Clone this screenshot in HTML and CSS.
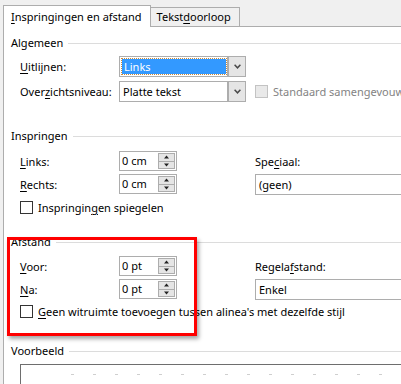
FILE: index.html
```html
<!DOCTYPE html>
<html lang="nl">
  <head>
    <meta charset="UTF-8" />
    <meta name="viewport" content="width=device-width, initial-scale=1.0" />
    <title>Alinea</title>
    <link rel="stylesheet" href="styles.css">
  </head>
  <body>
    <div class="dialog">
      <div class="tabs">
        <div class="tab active"><u>I</u>nspringingen en afstand</div>
        <div class="tab">Tekst<u>d</u>oorloop</div>
      </div>
      <div class="panel">
        <div class="legend">Algemeen</div>
        <div class="fields general">
          <span class="label"><u>U</u>itlijnen:</span>
          <div class="select">
            <span class="value"><span class="selected">Links</span></span>
            <span class="drop"><svg width="7" height="5" viewBox="0 0 7 5"><path d="M0.6 0.8 L3.5 3.8 L6.4 0.8" fill="none" stroke="#4a4a4a" stroke-width="1.5"/></svg></span>
          </div>
          <span></span>
          <span class="label">Over<u>z</u>ichtsniveau:</span>
          <div class="select">
            <span class="value">Platte tekst</span>
            <span class="drop"><svg width="7" height="5" viewBox="0 0 7 5"><path d="M0.6 0.8 L3.5 3.8 L6.4 0.8" fill="none" stroke="#4a4a4a" stroke-width="1.5"/></svg></span>
          </div>
          <div class="check disabled"><span class="box"></span><span>Standaard samengevouwen</span></div>
        </div>

        <div class="legend indent-title">Inspringen</div>
        <div class="fields spaced first">
          <span class="label"><u>L</u>inks:</span>
          <div class="spinner">
            <span class="value">0 cm</span>
            <span class="spin">
              <span class="up"><svg width="7" height="4" viewBox="0 0 7 4"><path d="M1 3.5 L3.5 0.5 L6 3.5Z" fill="#222"/></svg></span>
              <span class="down"><svg width="7" height="4" viewBox="0 0 7 4"><path d="M1 0.5 L3.5 3.5 L6 0.5Z" fill="#222"/></svg></span>
            </span>
          </div>
          <span class="label">Spe<u>c</u>iaal:</span>
          <span class="label"><u>R</u>echts:</span>
          <div class="spinner">
            <span class="value">0 cm</span>
            <span class="spin">
              <span class="up"><svg width="7" height="4" viewBox="0 0 7 4"><path d="M1 3.5 L3.5 0.5 L6 3.5Z" fill="#222"/></svg></span>
              <span class="down"><svg width="7" height="4" viewBox="0 0 7 4"><path d="M1 0.5 L3.5 3.5 L6 0.5Z" fill="#222"/></svg></span>
            </span>
          </div>
          <div class="select wide"><span class="value">(geen)</span></div>
          <div class="check row-check"><span class="box"></span><span>Inspringin<u>g</u>en spiegelen</span></div>
        </div>

        <div class="legend spacing-title">Afstand</div>
        <div class="fields spaced second">
          <span class="label"><u>V</u>oor:</span>
          <div class="spinner">
            <span class="value">0 pt</span>
            <span class="spin">
              <span class="up"><svg width="7" height="4" viewBox="0 0 7 4"><path d="M1 3.5 L3.5 0.5 L6 3.5Z" fill="#222"/></svg></span>
              <span class="down"><svg width="7" height="4" viewBox="0 0 7 4"><path d="M1 0.5 L3.5 3.5 L6 0.5Z" fill="#222"/></svg></span>
            </span>
          </div>
          <span class="label">Regela<u>f</u>stand:</span>
          <span class="label"><u>N</u>a:</span>
          <div class="spinner">
            <span class="value">0 pt</span>
            <span class="spin">
              <span class="up"><svg width="7" height="4" viewBox="0 0 7 4"><path d="M1 3.5 L3.5 0.5 L6 3.5Z" fill="#222"/></svg></span>
              <span class="down"><svg width="7" height="4" viewBox="0 0 7 4"><path d="M1 0.5 L3.5 3.5 L6 0.5Z" fill="#222"/></svg></span>
            </span>
          </div>
          <div class="select wide"><span class="value">Enkel</span></div>
          <div class="check row-check"><span class="box"></span><span><u>G</u>een witruimte toevoegen tussen alinea's met dezelfde stijl</span></div>
        </div>

        <div class="legend preview-title">Voorbeeld</div>
        <div class="preview"><div class="dashes"></div></div>
      </div>
      <div class="highlight"></div>
    </div>
  </body>
</html>
```

FILE: styles.css
```css
body {
  margin: 0;
  background-color: #f0f0f0;
  color: #000;
  font-family: "Noto Sans", sans-serif;
  font-size: 11px;
  overflow: hidden;
}
u {
  text-underline-offset: 2px;
}
.dialog {
  position: relative;
  width: 460px;
  margin-left: 3px;
  padding-top: 5px;
}
.tabs {
  display: flex;
  align-items: flex-end;
  height: 21px;
  border-bottom: 1px solid #adadad;
}
.tab {
  box-sizing: border-box;
  height: 19px;
  padding: 0 8px 0 6px;
  border: 1px solid #adadad;
  border-bottom: 0;
  border-left: 0;
  line-height: 18px;
}
.tab.active {
  height: 22px;
  margin-bottom: -1px;
  padding: 1px 8px 0 7px;
  border-left: 1px solid #adadad;
  background-color: #fff;
  line-height: 19px;
}
.panel {
  height: 400px;
  padding: 8px 0 0 7px;
  border-left: 1px solid #adadad;
  background-color: #fff;
}
.legend {
  display: flex;
  align-items: center;
  gap: 5px;
  height: 16px;
  line-height: 16px;
}
.legend::after {
  content: "";
  flex: 1;
  border-top: 1px solid #dcdcdc;
}
.fields {
  display: grid;
  grid-template-columns: 90px 127px 1fr;
  column-gap: 9px;
  align-items: center;
  padding-left: 9px;
}
.general {
  margin-top: 5px;
  grid-auto-rows: 21px;
  row-gap: 4px;
}
.indent-title {
  margin-top: 26px;
}
.spaced {
  grid-template-rows: 20px 20px 16px;
  row-gap: 3px;
}
.first {
  margin-top: 7px;
}
.first .row-check {
  margin-top: 5px;
}
.spacing-title {
  margin-top: 21px;
}
.second {
  margin-top: 6px;
}
.second .row-check {
  margin-top: 3px;
}
.preview-title {
  margin-top: 25px;
}
.select {
  box-sizing: border-box;
  display: flex;
  height: 21px;
  border: 1px solid #adadad;
  background-color: #fff;
}
.select .value {
  flex: 1;
  display: flex;
  align-items: center;
  padding-left: 3px;
}
.selected {
  flex: 1;
  margin: 1px 1px 1px -1px;
  padding-left: 2px;
  line-height: 15px;
  background-color: #3399ff;
  color: #fff;
  outline: 1px dotted #c9893a;
}
.drop {
  display: flex;
  align-items: center;
  justify-content: center;
  width: 16px;
  border-left: 2px solid #adadad;
  background-color: #e5e5e5;
}
.select.wide {
  width: 170px;
}
.spinner {
  box-sizing: border-box;
  display: flex;
  width: 58px;
  height: 20px;
  border: 1px solid #adadad;
}
.spinner .value {
  flex: 1;
  padding-left: 2px;
  line-height: 18px;
}
.spin {
  display: flex;
  flex-direction: column;
  width: 15px;
  margin: 1px 1px 1px 0;
  border: 1px solid #adadad;
  background-color: #e5e5e5;
}
.spin span {
  flex: 1;
  display: flex;
  align-items: center;
  justify-content: center;
}
.spin .up {
  border-bottom: 1px solid #adadad;
}
.check {
  display: flex;
  align-items: center;
  gap: 5px;
  white-space: nowrap;
}
.row-check {
  grid-column: 1 / -1;
}
.box {
  box-sizing: border-box;
  width: 13px;
  height: 13px;
  border: 1px solid #333;
  background-color: #fff;
}
.disabled {
  color: #838383;
}
.disabled .box {
  border-color: #c3c3c3;
  background-color: #e9e9e9;
}
.preview {
  height: 40px;
  margin: 5px 0 0 9px;
  border: 1px solid #6e6e6e;
}
.dashes {
  height: 1px;
  margin: 9px 0 0 50px;
  background-image: repeating-linear-gradient(90deg, #cfcfcf 0 3px, transparent 3px 22px);
}
.highlight {
  position: absolute;
  left: 4px;
  top: 237px;
  box-sizing: border-box;
  width: 190px;
  height: 99px;
  border: 3px solid #f00;
  box-shadow: 2px 3px 4px rgba(0, 0, 0, 0.35);
}
```
